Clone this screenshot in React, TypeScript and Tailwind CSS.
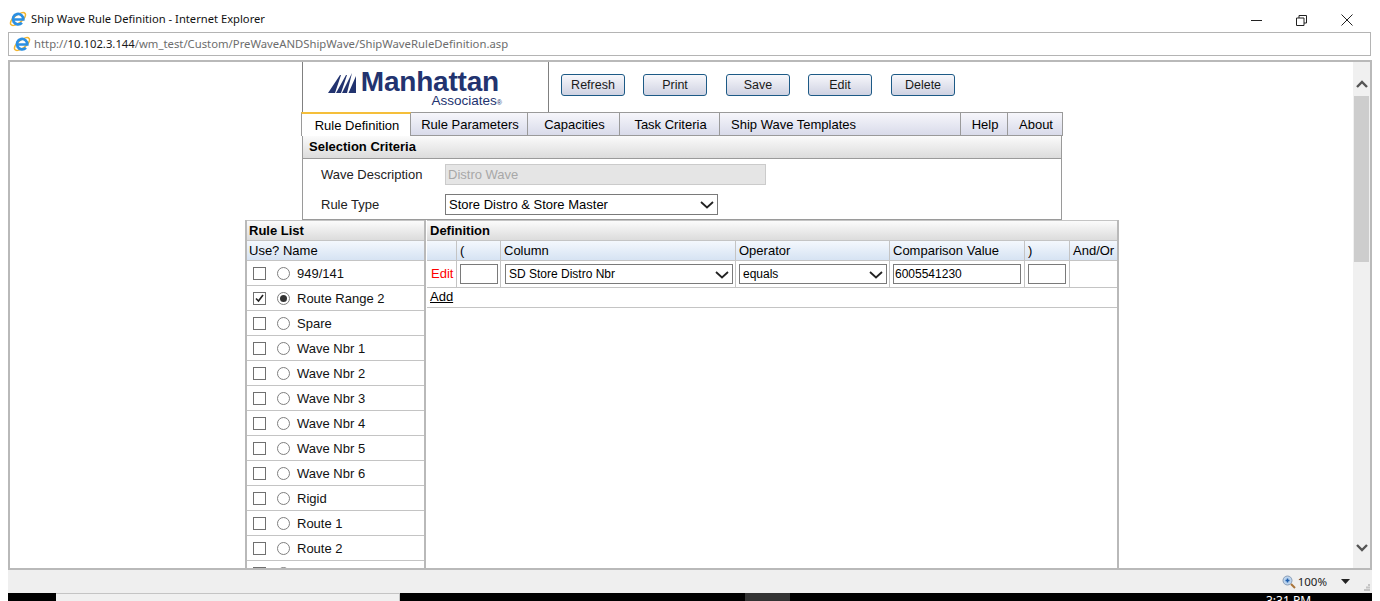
import React from 'react';

const tabs = [
  { label: 'Rule Parameters', w: 'w-[117px]' },
  { label: 'Capacities', w: 'w-[92px]' },
  { label: 'Task Criteria', w: 'w-[100px]' },
  { label: 'Ship Wave Templates', w: 'w-[241px]', left: true },
  { label: 'Help', w: 'w-[47px]' },
  { label: 'About', w: 'w-[55px]' },
];

const buttons = [
  { label: 'Refresh', ml: 'ml-[12px]' },
  { label: 'Print', ml: 'ml-[18px]' },
  { label: 'Save', ml: 'ml-[19px]' },
  { label: 'Edit', ml: 'ml-[18px]' },
  { label: 'Delete', ml: 'ml-[19px]' },
];

const rules = [
  '949/141', 'Route Range 2', 'Spare', 'Wave Nbr 1', 'Wave Nbr 2', 'Wave Nbr 3', 'Wave Nbr 4',
  'Wave Nbr 5', 'Wave Nbr 6', 'Rigid', 'Route 1', 'Route 2', '',
];

const defHeaders = ['', '(', 'Column', 'Operator', 'Comparison Value', ')', 'And/Or'];

const IeIcon = () => (
  <svg width="18" height="18" viewBox="0 0 18 18" className="shrink-0">
    <ellipse cx="9" cy="9" rx="9" ry="4" transform="rotate(-38 9 9)" fill="none" stroke="#f3b52e" strokeWidth="1.500" />
    <path d="M4.500 9.500H14.300A5.200 5.200 0 1 0 12.900 12.700" fill="none" stroke="#2b8fe2" strokeWidth="2.700" />
  </svg>
);

const Logo = () => (
  <div className="w-[247px] h-[50px] flex flex-col items-end border-l border-r border-[#808080] pr-[49px] pt-[8px] bg-white">
    <div className="flex items-center h-[24px]">
      <svg width="29" height="21" viewBox="0 0 29 21" className="mr-[4px]">
        <path d="M0 21 12 3h1L7 21zM8 21 18 3h1l-6 18zM14 21 24 1l-5 20zM20.500 21 28 4v17z" fill="#22336f" />
      </svg>
      <span className="text-[#22336f] font-bold text-[28px] leading-[24px] tracking-[-0.2px]">Manhattan</span>
    </div>
    <div className="text-[#22336f] text-[13.500px] leading-[13px] mr-[-3px]">
      Associates<span className="text-[7px]">®</span>
    </div>
  </div>
);

const Chevron = () => (
  <svg width="14" height="8" viewBox="0 0 14 8" className="absolute right-[3px] top-[6px] pointer-events-none">
    <path d="M1 1l6 5.500L13 1" fill="none" stroke="#222" strokeWidth="1.800" />
  </svg>
);

const FakeSelect = ({ value, className }: { value: string; className: string }) => (
  <div className={`relative border border-[#7a7a7a] bg-white text-black pl-[3px] flex items-center ${className}`}>
    {value}
    <Chevron />
  </div>
);

const Box = ({ checked }: { checked?: boolean }) => (
  <span className="w-[13px] h-[13px] border border-[#707070] bg-white flex items-center justify-center shrink-0">
    {checked && (
      <svg width="11" height="11" viewBox="0 0 11 11">
        <path d="M2 5.500 4.500 8 9 2" fill="none" stroke="#222" strokeWidth="1.600" />
      </svg>
    )}
  </span>
);

const Radio = ({ checked }: { checked?: boolean }) => (
  <span className="w-[13px] h-[13px] rounded-full border border-[#808080] bg-white flex items-center justify-center shrink-0 ml-[11px]">
    {checked && <span className="w-[7px] h-[7px] rounded-full bg-[#333]" />}
  </span>
);

const grayHead = 'bg-gradient-to-b from-[#fbfbfb] to-[#dcdcdc]';
const blueHead = 'bg-gradient-to-b from-[#f4f8fd] to-[#d6e3f3]';

const App: React.FC = () => {
  return (
    <div className="w-[1380px] h-[601px] overflow-hidden bg-white text-[13px] text-black flex flex-col" style={{ fontFamily: '"Liberation Sans", Arial, sans-serif' }}>
      {/* Window title */}
      <div className="h-[32px] flex items-center pl-[9px] pt-[6px] shrink-0" style={{ fontFamily: '"Noto Sans", sans-serif' }}>
        <IeIcon />
        <span className="ml-[4px] text-[11.200px] text-[#111]">Ship Wave Rule Definition - Internet Explorer</span>
        <div className="ml-auto flex items-center mr-[27px] gap-[34px] pt-[2px]">
          <svg width="11" height="11" viewBox="0 0 11 11"><path d="M0 5.500h11" stroke="#222" strokeWidth="1" /></svg>
          <svg width="11" height="11" viewBox="0 0 11 11"><path d="M.5 3h7.500v7.500H.5zM3 3V.5h7.500V8H8" fill="none" stroke="#222" strokeWidth="1" /></svg>
          <svg width="12" height="12" viewBox="0 0 12 12"><path d="M.5.500l11 11M11.500.500l-11 11" stroke="#222" strokeWidth="1" /></svg>
        </div>
      </div>

      {/* Address bar */}
      <div className="h-[24px] ml-[8px] w-[1363px] border border-[#b4b4b4] flex items-center pl-[4px] shrink-0" style={{ fontFamily: '"Noto Sans", sans-serif' }}>
        <IeIcon />
        <span className="ml-[3px] text-[11.300px] text-[#6d6d6d] whitespace-nowrap">
          http://<span className="text-[#1a1a1a]">10.102.3.144</span>/wm_test/Custom/PreWaveANDShipWave/ShipWaveRuleDefinition.asp
        </span>
      </div>

      {/* Page frame */}
      <div className="mt-[4px] ml-[8px] w-[1364px] h-[510px] border-2 border-[#b9b9b9] flex overflow-hidden shrink-0">
        <div className="flex-1 min-w-0 flex flex-col overflow-hidden">
          <div className="ml-[292px] w-[761px] flex flex-col shrink-0">
            {/* Logo and toolbar */}
            <div className="flex h-[50px]">
              <Logo />
              <div className="flex items-start pt-[12px]">
                {buttons.map(b => (
                  <button key={b.label} className={`${b.ml} w-[64px] h-[22px] rounded-[3px] border border-[#1d5a86] bg-gradient-to-b from-[#f7f7fb] to-[#cfd2e2] text-[12.500px] text-[#1a1a1a] leading-none`}>
                    {b.label}
                  </button>
                ))}
              </div>
            </div>

            {/* Tabs */}
            <div className="flex h-[24px] -ml-[1px] w-[762px]">
              <div className="w-[110px] border-t-2 border-t-[#f5bf3a] border-l border-r border-[#9a9a9a] bg-white flex items-center justify-center pt-[1px] pl-[2px]">Rule Definition</div>
              {tabs.map(t => (
                <div key={t.label} className={`${t.w} border-t border-b border-r border-[#9a9a9a] bg-gradient-to-b from-[#f6f6fb] to-[#d9dbea] flex items-center pt-[1px] ${t.left ? 'pl-[11px]' : 'justify-center pl-[2px]'}`}>
                  {t.label}
                </div>
              ))}
            </div>

            {/* Selection criteria */}
            <div className="w-[760px] h-[84px] border-l border-r border-b border-[#9a9a9a]">
              <div className={`h-[23px] ${grayHead} border-b border-[#9a9a9a] font-bold pl-[6px] flex items-center`}>Selection Criteria</div>
              <div className="flex items-center mt-[5px] h-[21px] pl-[18px]">
                <span className="w-[124px] text-[#222]">Wave Description</span>
                <div className="w-[321px] h-[21px] bg-[#e5e5e5] border border-[#cbcbcb] text-[#a8a8a8] pl-[2px] flex items-center">Distro Wave</div>
              </div>
              <div className="flex items-center mt-[9px] h-[21px] pl-[18px]">
                <span className="w-[124px] text-[#222]">Rule Type</span>
                <FakeSelect value="Store Distro &amp; Store Master" className="w-[273px] h-[21px]" />
              </div>
            </div>
          </div>

          {/* Lists */}
          <div className="flex ml-[235px] flex-1 min-h-0 overflow-hidden">
            <div className="w-[181px] border-l-2 border-r-2 border-[#b9b9b9] shrink-0">
              <div className={`h-[21px] ${grayHead} border-t border-b border-[#c4c4c4] font-bold pl-[2px] flex items-center`}>Rule List</div>
              <div className={`h-[20px] ${blueHead} border-b border-[#c4c4c4] pl-[2px] flex items-center`}>Use? Name</div>
              {rules.map((name, i) => (
                <div key={i} className="h-[25px] border-b border-[#c4c4c4] flex items-center pl-[6px]">
                  <Box checked={i === 1} />
                  <Radio checked={i === 1} />
                  <span className="ml-[7px] mt-[2px] text-[#111]">{name}</span>
                </div>
              ))}
            </div>
            <div className="ml-[1px] w-[692px] border-r-2 border-[#b9b9b9] shrink-0">
              <div className={`h-[21px] ${grayHead} border-t border-b border-[#c4c4c4] font-bold pl-[3px] flex items-center`}>Definition</div>
              <div className={`grid grid-cols-[30px_44px_235px_154px_135px_45px_1fr] h-[20px] ${blueHead} border-b border-[#c4c4c4]`}>
                {defHeaders.map((h, i) => (
                  <div key={i} className={`${i < 6 ? 'border-r border-[#c4c4c4]' : ''} pl-[3px] flex items-center`}>{h}</div>
                ))}
              </div>
              <div className="grid grid-cols-[30px_44px_235px_154px_135px_45px_1fr] h-[27px] border-b border-[#c4c4c4] items-stretch">
                <div className="border-r border-[#c4c4c4] pl-[4px] flex items-center text-[#ff0000]">Edit</div>
                <div className="border-r border-[#c4c4c4] pl-[3px] flex items-center">
                  <div className="w-[38px] h-[20px] border border-[#7a7a7a]" />
                </div>
                <div className="border-r border-[#c4c4c4] pl-[4px] flex items-center">
                  <FakeSelect value="SD Store Distro Nbr" className="w-[228px] h-[20px] text-[12px]" />
                </div>
                <div className="border-r border-[#c4c4c4] pl-[3px] flex items-center">
                  <FakeSelect value="equals" className="w-[148px] h-[20px] text-[12px]" />
                </div>
                <div className="border-r border-[#c4c4c4] pl-[3px] flex items-center">
                  <div className="w-[128px] h-[20px] border border-[#7a7a7a] pl-[1px] flex items-center text-[12px]">6005541230</div>
                </div>
                <div className="border-r border-[#c4c4c4] pl-[3px] flex items-center">
                  <div className="w-[38px] h-[20px] border border-[#7a7a7a]" />
                </div>
                <div />
              </div>
              <div className="h-[20px] border-b border-[#c4c4c4] pl-[3px] pb-[2px] flex items-center">
                <a className="underline">Add</a>
              </div>
            </div>
          </div>
        </div>

        {/* Scrollbar */}
        <div className="w-[17px] bg-[#f0f0f0] shrink-0 flex flex-col items-center">
          <div className="h-[34px] w-full flex items-center justify-center pt-[9px]">
            <svg width="12" height="8" viewBox="0 0 12 8"><path d="M1 7l5-5 5 5" fill="none" stroke="#555" strokeWidth="2.400" /></svg>
          </div>
          <div className="w-[15px] h-[166px] bg-[#cdcdcd]" />
          <div className="flex-1" />
          <div className="h-[34px] w-full flex items-center justify-center pb-[7px]">
            <svg width="12" height="8" viewBox="0 0 12 8"><path d="M1 1l5 5 5-5" fill="none" stroke="#555" strokeWidth="2.400" /></svg>
          </div>
        </div>
      </div>

      {/* Status bar */}
      <div className="ml-[8px] w-[1364px] h-[23px] bg-[#efefef] flex items-center justify-end shrink-0" style={{ fontFamily: '"Noto Sans", sans-serif' }}>
        <svg width="14" height="14" viewBox="0 0 14 14" className="mr-[2px]">
          <circle cx="5.500" cy="5.500" r="4.500" fill="#bcd4ee" stroke="#8a9db5" />
          <path d="M3.500 5.500h4M5.500 3.500v4" stroke="#1f5fae" strokeWidth="1.500" />
          <path d="M9 9l4 4" stroke="#a8733a" strokeWidth="2" />
        </svg>
        <span className="text-[11.500px] text-[#222]">100%</span>
        <svg width="9" height="5" viewBox="0 0 9 5" className="ml-[14px]"><path d="M0 0h9L4.500 5z" fill="#222" /></svg>
        <svg width="6" height="7" viewBox="0 0 6 7" className="ml-[14px] mr-[2px] mt-[12px]"><path d="M4 0h2v2H4zM2 2.500h2v2H2zM4 2.500h2v2H4zM0 5h2v2H0zM2 5h2v2H2zM4 5h2v2H4z" fill="#c4c4c4" /></svg>
      </div>

      {/* Taskbar peeking in at the bottom */}
      <div className="ml-[8px] w-[1364px] h-[8px] bg-black flex shrink-0 overflow-hidden">
        <div className="ml-[48px] w-[344px] bg-[#f0f0f0] border-t border-[#c4c4c4] border-r" />
        <div className="ml-[345px] w-[45px] bg-[#333333]" />
        <span className="ml-[476px] text-white text-[12px] leading-[14px] mt-[1px] whitespace-nowrap" style={{ fontFamily: '"Noto Sans", sans-serif' }}>3:31 PM</span>
      </div>
    </div>
  );
};

export default App;
